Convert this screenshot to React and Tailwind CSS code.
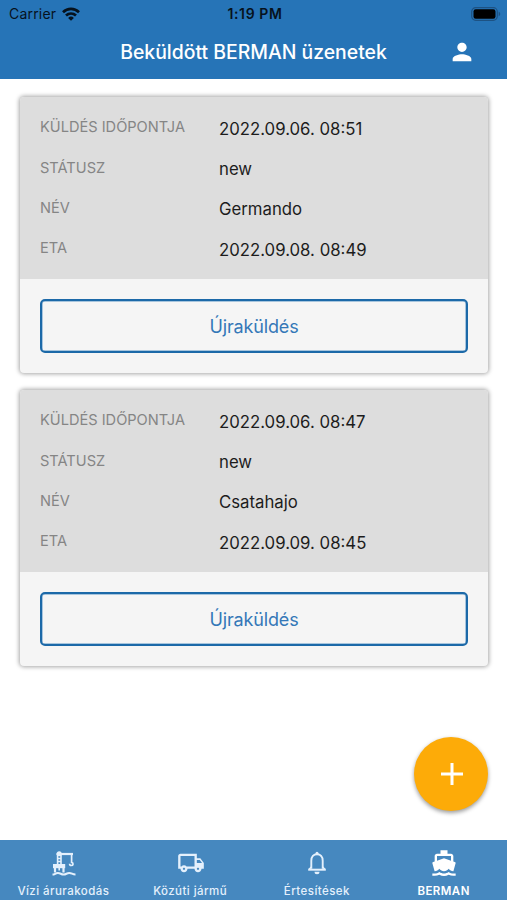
import {
  MdDirectionsBoat,
  MdOutlineLocalShipping,
  MdPerson,
} from "react-icons/md";

const messages = [
  { sent: "2022.09.06. 08:51", status: "new", name: "Germando", eta: "2022.09.08. 08:49" },
  { sent: "2022.09.06. 08:47", status: "new", name: "Csatahajo", eta: "2022.09.09. 08:45" },
];

function WifiIcon() {
  return (
    <svg width="18" height="14" viewBox="0 0 18 14" fill="none" stroke="#06121d" strokeWidth="2.7">
      <path d="M1 5.2C5.6.8 12.4.8 17 5.2" />
      <path d="M4 8.6c2.9-2.7 7.1-2.7 10 0" />
      <path d="M9 13.8 6.1 10.9a4.3 4.3 0 0 1 5.8 0Z" fill="#06121d" stroke="none" />
    </svg>
  );
}

function BatteryIcon() {
  return (
    <svg width="30" height="14" viewBox="0 0 30 14">
      <rect x=".7" y=".7" width="25.6" height="12.6" rx="4" fill="none" stroke="#1d5283" strokeWidth="1.2" />
      <rect x="2.5" y="2.3" width="22" height="9.4" rx="2.2" fill="#000" />
      <path d="M27.7 4.8c2 .7 2 3.7 0 4.4Z" fill="#1d5283" />
    </svg>
  );
}

function CraneIcon() {
  return (
    <svg width="24" height="25" viewBox="0 0 24 25" fill="none" stroke="currentColor" strokeWidth="1.7">
      {/* mast and jib */}
      <path d="M4.5 3H21" strokeWidth="2.2" />
      <circle cx="7.2" cy="2.8" r="2.5" fill="currentColor" stroke="none" />
      <path d="M5.6 3v11M9 3v11" strokeWidth="1.6" />
      <path d="M5.6 7.5H9M5.600 10.500H9" strokeWidth="1.3" />
      {/* cable and hook */}
      <path d="M19.6 3v8.300c2.100.5 1.800 3.200-.3 3.200-1.100 0-1.700-.7-1.700-1.700" />
      {/* pier */}
      <path d="M1 13h12.200v4.200H1z" fill="currentColor" stroke="none" />
      <path d="M3 16v5.500M11.500 16v5.500" strokeWidth="2.200" />
      <path d="M7.200 16v3.500" strokeWidth="1.600" />
      <path
        d="M.5 23.500c2.600 0 2.600-1.500 5.400-1.500s2.900 1.500 5.700 1.500 2.800-1.500 5.600-1.500 2.900 1.500 6.300 1.500"
        strokeWidth="2"
      />
    </svg>
  );
}

function BellIcon() {
  return (
    <svg width="20" height="24" viewBox="0 0 20 24" fill="none" stroke="currentColor" strokeWidth="1.9">
      <path d="M4.300 17.800V9.700c0-3.900 2.300-6.500 5.700-6.500s5.700 2.600 5.700 6.500v8.100" />
      <path d="M1.200 18.700h17.600" strokeWidth="2" />
      <path d="M4.300 16 2 18.500M15.700 16l2.300 2.500" strokeWidth="1.500" />
      <circle cx="10" cy="2.300" r="1.500" fill="currentColor" stroke="none" />
      <path d="M7.500 20.800h5a2.500 2.500 0 0 1-5 0Z" fill="currentColor" stroke="none" />
    </svg>
  );
}

function Field({ label, value }) {
  return (
    <div className="flex h-[40.3px]">
      <dt className="w-[179px] pt-[1px] text-[14.6px] leading-[20px] text-[#858585]">{label}</dt>
      <dd className="pt-[1.4px] text-[16.75px] leading-[23px] text-[#1c1c1c]">{value}</dd>
    </div>
  );
}

function MessageCard({ message }) {
  return (
    <article className="h-[276px] overflow-hidden rounded-[4px] bg-[#f5f5f5] shadow-[0_0_4px_1px_rgba(0,0,0,0.35)]">
      <dl className="h-[182px] bg-[#dddddd] px-5 pt-[19.3px]">
        <Field label="KÜLDÉS IDŐPONTJA" value={message.sent} />
        <Field label="STÁTUSZ" value={message.status} />
        <Field label="NÉV" value={message.name} />
        <Field label="ETA" value={message.eta} />
      </dl>
      <div className="px-5 pt-5">
        <button className="h-[54px] w-full rounded-[5px] border-2 border-[#1c69a8] text-[18px] tracking-[-0.15px] text-[#3478b8] shadow-[inset_0_0_0_0.5px_#5a95c6]">
          Újraküldés
        </button>
      </div>
    </article>
  );
}

function Tab({ icon, label, active }) {
  return (
    <button
      className={
        active
          ? "flex flex-1 flex-col items-center text-white"
          : "flex flex-1 flex-col items-center text-[#e4f0fc]"
      }
    >
      <span className="flex h-[42px] items-center justify-center pt-[4px] pl-[1px]">{icon}</span>
      <span
        className={
          active
            ? "text-[11.5px] leading-[18px] font-semibold tracking-[0.45px]"
            : "text-[11.5px] leading-[18px] font-medium tracking-[0.45px]"
        }
      >
        {label}
      </span>
    </button>
  );
}

export default function App() {
  return (
    <div className="relative flex h-[900px] w-[507px] flex-col overflow-hidden bg-white font-['Inter',sans-serif]">
      <header className="h-[79px] bg-[#2674b7]">
        <div className="grid h-[27px] grid-cols-3 items-center pr-[6px] pl-[9px] text-[14px] text-[#06121d]">
          <div className="flex items-center gap-[6px]">
            <span className="tracking-[0.2px]">Carrier</span>
            <WifiIcon />
          </div>
          <span className="text-center font-semibold tracking-[0.6px]">1:19 PM</span>
          <div className="flex justify-end">
            <BatteryIcon />
          </div>
        </div>
        <div className="grid h-[51px] grid-cols-[1fr_auto_1fr] items-center">
          <span />
          <h1 className="text-[19.4px] font-medium text-white">Beküldött BERMAN üzenetek</h1>
          <button className="mr-[31px] justify-self-end pb-[2px] text-white">
            <MdPerson size={28} />
          </button>
        </div>
      </header>

      <main className="flex flex-1 flex-col gap-[17px] pt-[18px] pr-[19px] pl-5">
        {messages.map((message) => (
          <MessageCard key={message.sent} message={message} />
        ))}
      </main>

      {/* floating add button */}
      <button className="absolute top-[737px] left-[414px] flex h-[74px] w-[74px] items-center justify-center rounded-full bg-[#fdab08] pl-[2px] shadow-[0_2px_4px_rgba(0,0,0,0.4)]">
        <svg width="22" height="22" viewBox="0 0 22 22" stroke="#fff" strokeWidth="3">
          <path d="M11 0v22M0 11h22" />
        </svg>
      </button>

      <nav className="flex h-[60px] bg-[#4688bf]">
        <Tab icon={<CraneIcon />} label="Vízi árurakodás" />
        <Tab icon={<MdOutlineLocalShipping size={28} />} label="Közúti jármű" />
        <Tab icon={<BellIcon />} label="Értesítések" />
        <Tab icon={<MdDirectionsBoat size={28} />} label="BERMAN" active />
      </nav>
    </div>
  );
}
